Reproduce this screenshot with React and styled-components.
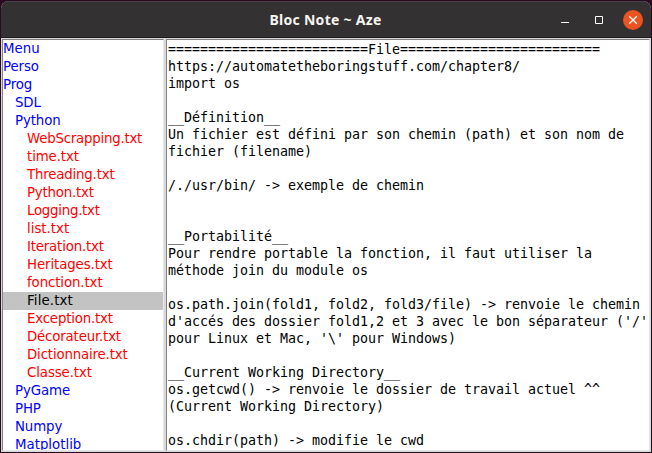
import React from 'react';
import styled, { createGlobalStyle } from 'styled-components';

const Global = createGlobalStyle`
  html, body, #root { margin: 0; height: 100%; }
  body { background: #2c001e; overflow: hidden; }
  * { box-sizing: border-box; }
`;

const Desktop = styled.div`
  height: 453px;
  width: 652px;
  padding: 1px;
  background: #2a0a20;
`;

const Window = styled.div`
  display: flex;
  flex-direction: column;
  height: 451px;
  border-radius: 8px 8px 0 0;
  overflow: hidden;
  background: #d9d9d9;
`;

const TitleBar = styled.header`
  display: grid;
  grid-template-columns: 1fr auto 1fr;
  align-items: center;
  flex: none;
  height: 37px;
  background: #333131;
  border-top: 1px solid #454343;
  border-bottom: 1px solid #1d1b1b;
`;

const Title = styled.h1`
  grid-column: 2;
  margin: 0;
  padding-right: 1px;
  color: #f5f4f2;
  font: bold 14px/20px "Noto Sans", sans-serif;
  letter-spacing: 0.28px;
  white-space: pre;
`;

const Controls = styled.div`
  display: flex;
  justify-content: flex-end;
  gap: 14px;
  padding-right: 8px;
`;

const ControlButton = styled.button`
  display: grid;
  place-items: center;
  width: 20px;
  height: 20px;
  padding: 0;
  border: 0;
  border-radius: 50%;
  background: ${(p) => (p.$close ? '#e95420' : 'transparent')};
`;

const Panes = styled.main`
  display: flex;
  flex: 1;
  min-height: 0;
`;

const Pane = styled.section`
  border: 1px solid;
  border-color: #d9d9d9 #d9d9d9 #d9d9d9 #d9d9d9;
  overflow: hidden;
`;

const Sunken = styled.div`
  height: 100%;
  overflow: hidden;
  background: #fff;
  border: 1px solid;
  border-color: #828282 #e6e8e8 #e6e8e8 #828282;
`;

const TreePane = styled(Pane)`
  flex: none;
  width: 164px;
`;

const TextPane = styled(Pane)`
  flex: 1;
`;

const Row = styled.div`
  height: 18px;
  padding-left: ${(p) => p.$depth * 12}px;
  font: 13.33px/17px "DejaVu Sans", sans-serif;
  letter-spacing: ${(p) => p.$tracking}px;
  white-space: pre;
  color: ${(p) => (p.$selected ? '#000' : p.$file ? '#f00' : '#00f')};
  background: ${(p) => (p.$selected ? '#c3c3c3' : 'transparent')};
`;

const Note = styled.pre`
  margin: 0;
  padding: 1px 0 0 1px;
  color: #000;
  font: 13.33px/17px "DejaVu Sans Mono", monospace;
  letter-spacing: -0.025px;
`;

// name, depth, letter spacing
const tree = [
  ['Menu', 0, 0], ['Perso', 0], ['Prog', 0], ['SDL', 1], ['Python', 1],
  ['WebScrapping.txt', 2, -0.22], ['time.txt', 2], ['Threading.txt', 2, -0.18],
  ['Python.txt', 2, -0.2], ['Logging.txt', 2, -0.25], ['list.txt', 2, 0],
  ['Iteration.txt', 2, -0.18], ['Heritages.txt', 2], ['fonction.txt', 2],
  ['File.txt', 2, 0.12], ['Exception.txt', 2, -0.18], ['Décorateur.txt', 2, -0.17],
  ['Dictionnaire.txt', 2, -0.16], ['Classe.txt', 2],
  ['PyGame', 1], ['PHP', 1], ['Numpy', 1], ['Matplotlib', 1, 0],
];

const note = [
  '=========================File=========================',
  'https://automatetheboringstuff.com/chapter8/',
  'import os',
  '',
  '__Définition__',
  'Un fichier est défini par son chemin (path) et son nom de',
  'fichier (filename)',
  '',
  '/./usr/bin/ -> exemple de chemin',
  '',
  '',
  '__Portabilité__',
  'Pour rendre portable la fonction, il faut utiliser la',
  'méthode join du module os',
  '',
  'os.path.join(fold1, fold2, fold3/file) -> renvoie le chemin',
  "d'accés des dossier fold1,2 et 3 avec le bon séparateur ('/'",
  "pour Linux et Mac, '\\' pour Windows)",
  '',
  '__Current Working Directory__',
  'os.getcwd() -> renvoie le dossier de travail actuel ^^',
  '(Current Working Directory)',
  '',
  'os.chdir(path) -> modifie le cwd',
].join('\n');

export default function App() {
  return (
    <Desktop>
      <Global />
      <Window>
        <TitleBar>
          <Title>Bloc Note ~ Aze</Title>
          <Controls>
            <ControlButton aria-label="Minimize">
              <svg width="20" height="20"><path d="M6 12.5h8" stroke="#fff" /></svg>
            </ControlButton>
            <ControlButton aria-label="Maximize">
              <svg width="20" height="20"><path d="M6.5 6.5h7v7h-7z" fill="none" stroke="#fff" /></svg>
            </ControlButton>
            <ControlButton $close aria-label="Close">
              <svg width="20" height="20"><path d="M6.2 6.2l7.6 7.6M13.8 6.2l-7.6 7.6" stroke="#fff" strokeWidth="1.3" /></svg>
            </ControlButton>
          </Controls>
        </TitleBar>
        <Panes>
          <TreePane>
            <Sunken>
              {tree.map(([name, depth, tracking = -0.1]) => (
                <Row
                  key={name}
                  $depth={depth}
                  $tracking={tracking}
                  $file={name.endsWith('.txt')}
                  $selected={name === 'File.txt'}
                >
                  {name}
                </Row>
              ))}
            </Sunken>
          </TreePane>
          <TextPane>
            <Sunken><Note>{note}</Note></Sunken>
          </TextPane>
        </Panes>
      </Window>
    </Desktop>
  );
}
